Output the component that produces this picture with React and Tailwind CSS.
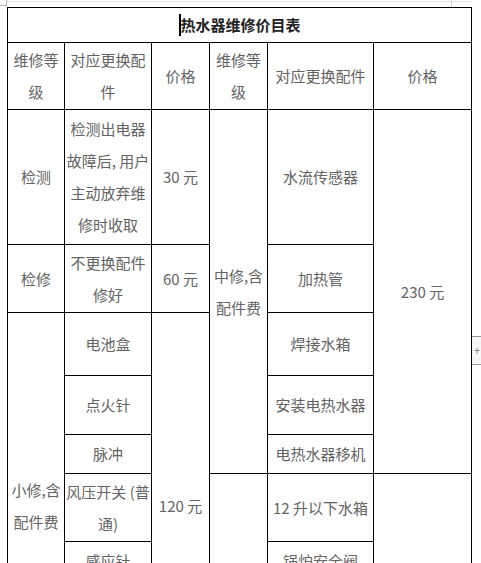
import React from "react";

const cell = "border border-black p-0 text-center align-middle";

function Lines({ children }) {
  // each array item is one visual line
  return (
    <>
      {children.map((t, i) => (
        <div key={i} className="whitespace-nowrap">
          {t}
        </div>
      ))}
    </>
  );
}

export default function App() {
  return (
    <div className="relative w-[481px] h-[563px] overflow-hidden bg-white font-['Noto_Sans_CJK_SC',sans-serif] text-[15px] leading-[32px] text-[#636363]">
      {/* page corner marks */}
      <div className="absolute left-0 top-[5px] w-[7px] h-px bg-[#b5b5b5]" />
      <div className="absolute left-[6px] top-0 w-px h-[6px] bg-[#b5b5b5]" />
      <div className="absolute left-[7px] top-[1px] w-[464px] h-px bg-[#e2e2e2]" />
      <div className="absolute left-[451px] top-0 w-px h-[7px] bg-[#d0d0d0]" />

      {/* add-row handle */}
      <div className="absolute left-[472px] top-[336px] w-[9px] h-[29px] border-y border-[#9a9a9a] bg-[#f6f6f6] flex items-center justify-end pr-[1px] text-[11px] leading-none text-[#777]">
        +
      </div>

      <div className="pl-[7px] pt-[7px]">
        <table className="table-fixed border-collapse w-[465px]">
          <colgroup>
            <col className="w-[57px]" />
            <col className="w-[87px]" />
            <col className="w-[58px]" />
            <col className="w-[58px]" />
            <col className="w-[106px]" />
            <col className="w-[98px]" />
          </colgroup>
          <tbody>
            <tr className="h-[35px]">
              <td colSpan={6} className={cell + " font-bold text-[#222]"}>
                <span className="inline-block w-[2px] h-[22px] bg-black align-middle -mt-[3px]" />
                热水器维修价目表
              </td>
            </tr>
            <tr className="h-[67px]">
              <td className={cell}>
                <Lines>{["维修等", "级"]}</Lines>
              </td>
              <td className={cell}>
                <Lines>{["对应更换配", "件"]}</Lines>
              </td>
              <td className={cell}>价格</td>
              <td className={cell}>
                <Lines>{["维修等", "级"]}</Lines>
              </td>
              <td className={cell}>对应更换配件</td>
              <td className={cell}>价格</td>
            </tr>
            <tr className="h-[135px]">
              <td className={cell}>检测</td>
              <td className={cell}>
                <Lines>{["检测出电器", "故障后, 用户", "主动放弃维", "修时收取"]}</Lines>
              </td>
              <td className={cell}>30 元</td>
              <td rowSpan={5} className={cell}>
                <Lines>{["中修,含", "配件费"]}</Lines>
              </td>
              <td className={cell}>水流传感器</td>
              <td rowSpan={5} className={cell}>230 元</td>
            </tr>
            <tr className="h-[68px]">
              <td className={cell}>检修</td>
              <td className={cell}>
                <Lines>{["不更换配件", "修好"]}</Lines>
              </td>
              <td className={cell}>60 元</td>
              <td className={cell}>加热管</td>
            </tr>
            <tr className="h-[63px]">
              <td rowSpan={7} className={cell}>
                <Lines>{["小修,含", "配件费"]}</Lines>
              </td>
              <td className={cell}>电池盒</td>
              <td rowSpan={7} className={cell}>120 元</td>
              <td className={cell}>焊接水箱</td>
            </tr>
            <tr className="h-[59px]">
              <td className={cell}>点火针</td>
              <td className={cell}>安装电热水器</td>
            </tr>
            <tr className="h-[39px]">
              <td className={cell}>脉冲</td>
              <td className={cell}>电热水器移机</td>
            </tr>
            <tr className="h-[68px]">
              <td className={cell}>
                <Lines>{["风压开关 (普", "通)"]}</Lines>
              </td>
              <td rowSpan={4} className={cell}>
                <Lines>{["大修,含", "配件费"]}</Lines>
              </td>
              <td className={cell}>12 升以下水箱</td>
              <td rowSpan={4} className={cell}>350 元</td>
            </tr>
            <tr className="h-[39px]">
              <td className={cell}>感应针</td>
              <td className={cell}>锅炉安全阀</td>
            </tr>
            <tr className="h-[59px]">
              <td className={cell}>主板</td>
              <td className={cell}>燃气比例阀</td>
            </tr>
            <tr className="h-[59px]">
              <td className={cell}>温控器</td>
              <td className={cell}>更换主控板</td>
            </tr>
          </tbody>
        </table>
      </div>
    </div>
  );
}
